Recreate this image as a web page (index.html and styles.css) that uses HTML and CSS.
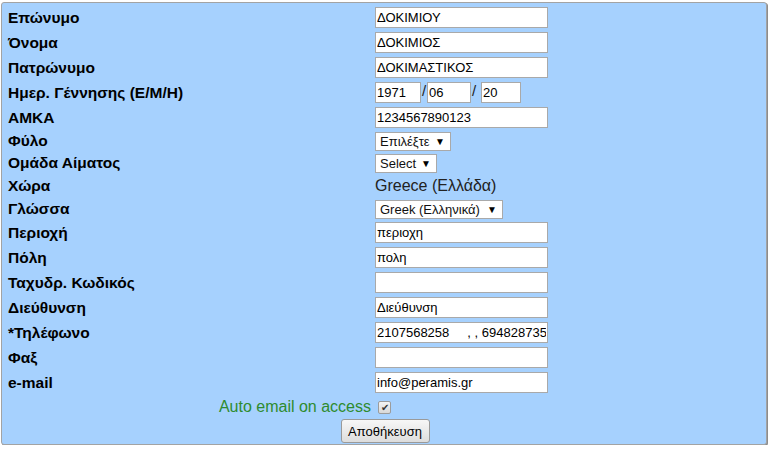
FILE: index.html
```html
<!DOCTYPE html>
<html>
<head>
<meta charset="utf-8">
<link rel="stylesheet" href="styles.css">
</head>
<body>
<div class="panel">
  <div class="form">
    <div class="lbl">Επώνυμο</div>
    <div class="val"><input class="txt" value="ΔΟΚΙΜΙΟΥ"></div>

    <div class="lbl">Όνομα</div>
    <div class="val"><input class="txt" value="ΔΟΚΙΜΙΟΣ"></div>

    <div class="lbl">Πατρώνυμο</div>
    <div class="val"><input class="txt" value="ΔΟΚΙΜΑΣΤΙΚΟΣ"></div>

    <div class="lbl">Ημερ. Γέννησης (Ε/Μ/Η)</div>
    <div class="val date">
      <input class="txt d-y" value="1971"><span class="slash s1">/</span><input class="txt d-m" value="06"><span class="slash s2">/</span><input class="txt d-d" value="20">
    </div>

    <div class="lbl">ΑΜΚΑ</div>
    <div class="val"><input class="txt" value="1234567890123"></div>

    <div class="lbl sel-row">Φύλο</div>
    <div class="val sel-row"><span class="sel s-gender">Επιλέξτε<span class="arrow">▼</span></span></div>

    <div class="lbl sel-row">Ομάδα Αίματος</div>
    <div class="val sel-row"><span class="sel s-blood">Select<span class="arrow">▼</span></span></div>

    <div class="lbl plain-row">Χώρα</div>
    <div class="val plain-row country">Greece (Ελλάδα)</div>

    <div class="lbl sel-row">Γλώσσα</div>
    <div class="val sel-row"><span class="sel s-lang">Greek (Ελληνικά)<span class="arrow">▼</span></span></div>

    <div class="lbl">Περιοχή</div>
    <div class="val"><input class="txt" value="περιοχη"></div>

    <div class="lbl">Πόλη</div>
    <div class="val"><input class="txt" value="πολη"></div>

    <div class="lbl">Ταχυδρ. Κωδικός</div>
    <div class="val"><input class="txt" value=""></div>

    <div class="lbl">Διεύθυνση</div>
    <div class="val"><input class="txt" value="Διεύθυνση"></div>

    <div class="lbl">*Τηλέφωνο</div>
    <div class="val"><input class="txt" value="2107568258     , , 694828735"></div>

    <div class="lbl">Φαξ</div>
    <div class="val"><input class="txt" value=""></div>

    <div class="lbl">e-mail</div>
    <div class="val"><input class="txt" value="info@peramis.gr"></div>

    <div class="auto-lbl">Auto email on access</div>
    <div class="val auto-val"><span class="check">✔</span></div>

    <div class="actions"><button class="btn">Αποθήκευση</button></div>
  </div>
</div>
</body>
</html>
```
FILE: styles.css
```css
html, body {
  margin: 0;
  padding: 0;
  background: #ffffff;
}
body {
  font-family: "Liberation Sans", Arial, sans-serif;
  color: #000;
}
.panel {
  margin: 2px 0 0 1px;
  width: 766px;
  background: #a6d1fe;
  border: 1px solid #a3a3a3;
  border-radius: 3px;
  box-shadow: 1px 1px 0 #8c8c8c;
  padding: 2px 0 0 0;
  height: 443px;
  box-sizing: border-box;
}
.form {
  display: grid;
  grid-template-columns: 370px 1fr;
}
.lbl {
  font-weight: bold;
  font-size: 15.5px;
  padding-left: 6px;
  height: 25px;
  display: flex;
  align-items: center;
  color: #000;
}
.val {
  height: 25px;
  display: flex;
  align-items: center;
  padding-left: 3px;
}
.sel-row { height: 22px; }
.plain-row { height: 24px; }
.txt {
  box-sizing: border-box;
  width: 173px;
  height: 21px;
  margin: 0;
  border: 1px solid #a9a9a9;
  background: #fff;
  font-family: "Liberation Sans", Arial, sans-serif;
  font-size: 13px;
  color: #000;
  padding: 0 1px;
  outline: none;
}
.date .d-y { width: 46px; }
.date .d-m { width: 44px; }
.date .d-d { width: 40px; }
.slash {
  font-size: 15px;
  color: #222;
  transform: translateY(-2px);
  text-align: center;
}
.s1 { width: 6px; }
.s2 { width: 6px; margin-right: 4px; }
.sel {
  box-sizing: border-box;
  height: 19px;
  border: 1px solid #a9a9a9;
  background: #fff;
  font-size: 13px;
  color: #111;
  display: flex;
  align-items: center;
  justify-content: space-between;
  padding: 0 5px 0 4px;
}
.s-gender { width: 76px; }
.s-blood { width: 62px; }
.s-lang { width: 128px; }
.arrow {
  font-size: 10px;
  color: #000;
}
.country {
  font-size: 16px;
  color: #222;
}
.auto-lbl {
  height: 24px;
  display: flex;
  align-items: center;
  justify-content: flex-end;
  padding-right: 1px;
  font-size: 16px;
  color: #2e8b2e;
}
.auto-val { height: 24px; padding-left: 6px; }
.check {
  box-sizing: border-box;
  width: 13px;
  height: 13px;
  border: 1px solid #9c9c9c;
  border-radius: 2px;
  background: linear-gradient(#f4f4f4, #d8d8d8);
  font-size: 10px;
  line-height: 11px;
  color: #333;
  display: flex;
  align-items: center;
  justify-content: center;
}
.actions {
  grid-column: 1 / 3;
  display: flex;
  justify-content: center;
}
.btn {
  box-sizing: border-box;
  width: 89px;
  height: 24px;
  margin-left: 2px;
  border: 1px solid #9a9a9a;
  border-radius: 3px;
  background: linear-gradient(#f7f7f7, #dddddd);
  font-family: "Liberation Sans", Arial, sans-serif;
  font-size: 13px;
  color: #000;
  padding: 0;
}
```
